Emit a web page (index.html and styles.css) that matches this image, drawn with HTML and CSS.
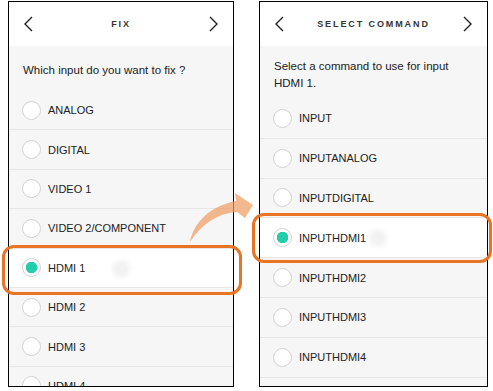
FILE: index.html
```html
<!DOCTYPE html>
<html lang="en">
<head>
    <meta charset="UTF-8">
    <meta name="viewport" content="width=device-width, initial-scale=1.0">
    <title>Fix input</title>
    <link rel="stylesheet" href="styles.css">
</head>
<body>

<div class="stage">

    <!-- first screen: pick the input -->
    <div class="phone phone-left">
        <div class="bar">
            <svg class="chev" width="10" height="16" viewBox="0 0 10 16"><path d="M9 1 L2 8 L9 15" /></svg>
            <span class="title">FIX</span>
            <svg class="chev" width="10" height="16" viewBox="0 0 10 16"><path d="M1 1 L8 8 L1 15" /></svg>
        </div>
        <p class="intro intro-short">Which input do you want to fix ?</p>
        <ul class="options">
            <li class="option"><span class="radio"></span>ANALOG</li>
            <li class="option"><span class="radio"></span>DIGITAL</li>
            <li class="option"><span class="radio"></span>VIDEO 1</li>
            <li class="option"><span class="radio"></span>VIDEO 2/COMPONENT</li>
            <li class="option checked"><span class="radio"></span>HDMI 1<span class="ripple"></span></li>
            <li class="option"><span class="radio"></span>HDMI 2</li>
            <li class="option"><span class="radio"></span>HDMI 3</li>
            <li class="option"><span class="radio"></span>HDMI 4</li>
        </ul>
    </div>

    <!-- second screen: pick the command -->
    <div class="phone phone-right">
        <div class="bar">
            <svg class="chev" width="10" height="16" viewBox="0 0 10 16"><path d="M9 1 L2 8 L9 15" /></svg>
            <span class="title">SELECT COMMAND</span>
            <svg class="chev" width="10" height="16" viewBox="0 0 10 16"><path d="M1 1 L8 8 L1 15" /></svg>
        </div>
        <p class="intro intro-long">Select a command to use for input HDMI 1.</p>
        <ul class="options options-loose">
            <li class="option"><span class="radio"></span>INPUT</li>
            <li class="option"><span class="radio"></span>INPUTANALOG</li>
            <li class="option"><span class="radio"></span>INPUTDIGITAL</li>
            <li class="option checked"><span class="radio"></span>INPUTHDMI1<span class="ripple ripple-far"></span></li>
            <li class="option"><span class="radio"></span>INPUTHDMI2</li>
            <li class="option"><span class="radio"></span>INPUTHDMI3</li>
            <li class="option"><span class="radio"></span>INPUTHDMI4</li>
            <li class="option"><span class="radio"></span></li>
        </ul>
    </div>

    <!-- callouts drawn over the screens -->
    <div class="hilite hilite-left"></div>
    <div class="hilite hilite-right"></div>
    <svg class="arrow" width="493" height="391" viewBox="0 0 493 391">
        <path d="M190 242 C194 222 210 206 236 201 L235 193 L253 205 L245 218 L237 212 C220 213 203 222 190 242 Z" />
    </svg>
</div>

</body>
</html>
```

FILE: styles.css
```css
body {
    margin: 0;
    background: #fff;
    font-family: "Liberation Sans", Arial, sans-serif;
    color: #222;
}
.stage {
    position: relative;
    display: flex;
    gap: 25px;
    padding: 1px 0 0 8px;
    width: 493px;
    height: 391px;
    box-sizing: border-box;
}
.phone {
    border: 1px solid #000;
    height: 386px;
    box-sizing: border-box;
    background-color: #f6f6f6;
    overflow: hidden;
}
.phone-left {
    width: 226px;
}
.phone-right {
    width: 229px;
}

.bar {
    height: 44px;
    background-color: #fff;
    display: flex;
    align-items: center;
    justify-content: space-between;
    padding: 0 14px;
}
.chev path {
    fill: none;
    stroke: #222;
    stroke-width: 1.4;
}
.title {
    font-size: 9px;
    font-weight: bold;
    letter-spacing: 1.9px;
    color: #333;
}

.intro {
    margin: 0;
    font-size: 11.5px;
    padding: 0 14px;
}
.intro-short {
    line-height: 14px;
    padding-top: 17px;
    padding-bottom: 14px;
}
.intro-long {
    line-height: 17px;
    padding-top: 12px;
    padding-bottom: 7px;
    padding-right: 30px;
}

/* radio list */
.options {
    list-style: none;
    margin: 0;
    padding: 0;
}
.option {
    position: relative;
    height: 39.4px;
    box-sizing: border-box;
    border-bottom: 1px solid #e6e6e6;
    display: flex;
    align-items: center;
    padding-left: 13px;
    font-size: 11px;
}
.options-loose .option {
    height: 39.8px;
}
.radio {
    width: 19px;
    height: 19px;
    box-sizing: border-box;
    border: 1px solid #d2d2d2;
    border-radius: 50%;
    background-color: #fff;
    margin-right: 7px;
    flex-shrink: 0;
}
.checked {
    background-color: #fff;
}
.checked .radio {
    background: radial-gradient(circle, #22cfaa 0 5.5px, #fff 6px);
}
.ripple {
    position: absolute;
    left: 100px;
    top: 8px;
    width: 24px;
    height: 24px;
    border-radius: 50%;
    background: radial-gradient(circle, #f2f2f2 0 5px, rgba(242, 242, 242, 0) 12px);
}
.ripple-far {
    left: 106px;
}

/* orange callouts */
.hilite {
    position: absolute;
    border: 3px solid #e97424;
    border-radius: 12px;
    width: 240px;
    height: 50px;
    box-sizing: border-box;
}
.hilite-left {
    left: 2px;
    top: 245px;
}
.hilite-right {
    left: 252px;
    top: 213px;
}
.arrow {
    position: absolute;
    left: 0;
    top: 0;
    pointer-events: none;
}
.arrow path {
    fill: #ef9d63;
    opacity: 0.72;
}
```
